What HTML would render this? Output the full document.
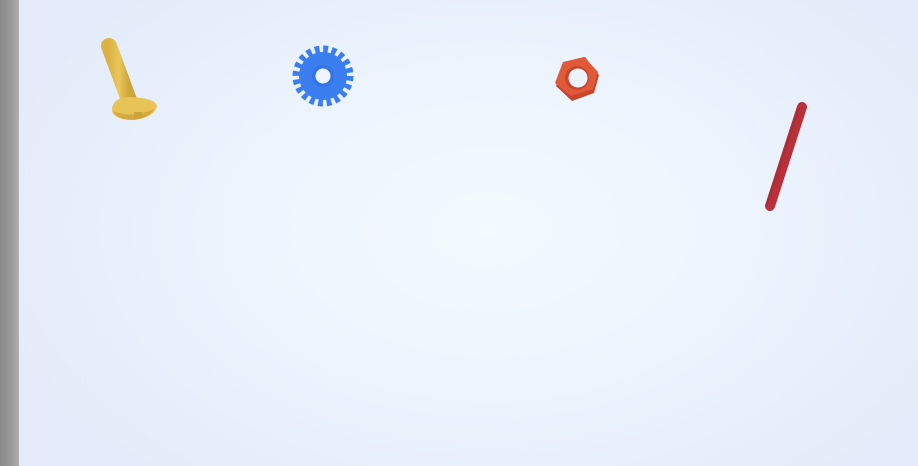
<!DOCTYPE html>
<html><head><style>
html,body{margin:0;padding:0;width:918px;height:466px;overflow:hidden}
body{background:radial-gradient(ellipse 520px 330px at 490px 230px,#f3fbff 0%,#ebf3fd 55%,#e4ebfa 100%);position:relative;font-family:"Liberation Sans",sans-serif}
.strip{position:absolute;left:0;top:0;width:19px;height:466px;background:linear-gradient(90deg,#8a8a8a,#9a9a9a 60%,#b0b0b0)}
svg{position:absolute;left:0;top:0}
</style></head><body>
<div class="strip"></div>
<svg width="918" height="466" viewBox="0 0 918 466">
<defs>
<linearGradient id="y" x1="0" x2="1"><stop offset="0" stop-color="#d9b443"/><stop offset=".5" stop-color="#ebc65a"/><stop offset="1" stop-color="#cda53a"/></linearGradient>
</defs>
<!-- bolt -->
<line x1="109" y1="46" x2="129" y2="100" stroke="url(#y)" stroke-width="16" stroke-linecap="round"/>
<path d="M112 110 Q112 97 131 97 Q155 98 157 106 Q155 117 134 120 Q113 120 112 110Z" fill="#e8c356"/>
<path d="M113 111 Q132 119 154 109 Q150 118 134 120 Q117 120 113 111Z" fill="#d2ab40"/>
<rect x="134" y="112" width="8" height="6" fill="#c9a23a"/>
<!-- gear -->
<circle cx="323" cy="76" r="26" fill="none" stroke="#3b7ef0" stroke-width="9" stroke-dasharray="4.6 3.57"/>
<circle cx="323" cy="76" r="24" fill="#3b7ef0"/>
<circle cx="323" cy="76" r="11" fill="#3574e8"/>
<circle cx="323" cy="76" r="7.5" fill="#eef4fd"/>
<!-- nut -->
<polygon points="563,63 585,57 599,75 594,93 572,101 556,86" fill="#c8442a"/>
<polygon points="563,62 584,57 598,72 593,89 571,96 555,83" fill="#e05a3a"/>
<circle cx="577" cy="78" r="12" fill="#c9452c"/>
<circle cx="578" cy="78" r="9.5" fill="#eef4fd"/>
<!-- rod -->
<line x1="802" y1="107" x2="770" y2="206" stroke="#b8313a" stroke-width="10" stroke-linecap="round"/>
<line x1="799" y1="108" x2="767" y2="205" stroke="#a0262e" stroke-width="2" opacity=".5"/>
</svg>
</body></html>
